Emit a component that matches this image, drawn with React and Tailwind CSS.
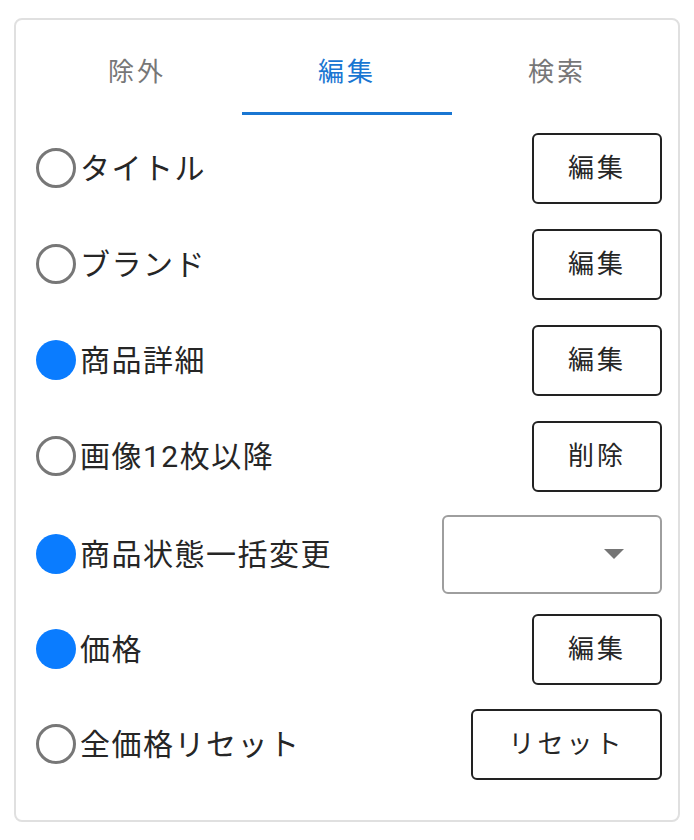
import { useState } from "react";

const tabs = ["除外", "編集", "検索"];

// 行ごとの高さは見た目に合わせて調整
const rows = [
  { label: "タイトル", checked: false, action: "編集", h: "h-[96px]" },
  { label: "ブランド", checked: false, action: "編集", h: "h-[96px]" },
  { label: "商品詳細", checked: true, action: "編集", h: "h-[96px]" },
  { label: "画像12枚以降", checked: false, action: "削除", h: "h-[96px]" },
  { label: "商品状態一括変更", checked: true, select: true, h: "h-[100px]" },
  { label: "価格", checked: true, action: "編集", h: "h-[90px]" },
  { label: "全価格リセット", checked: false, action: "リセット", wide: true, h: "h-[100px]" },
];

function Radio({ checked }) {
  if (checked) {
    return <span className="block w-[40px] h-[40px] rounded-full bg-[#0a7cff] shrink-0" />;
  }
  return <span className="block w-[40px] h-[40px] rounded-full border-[3px] border-[#777777] shrink-0" />;
}

export default function App() {
  const [active, setActive] = useState(1);

  return (
    <div
      className="min-h-screen bg-white pt-[18px] px-[14px]"
      style={{ fontFamily: '"Roboto", "Noto Sans CJK JP", sans-serif' }}
    >
      <div className="w-[666px] h-[804px] border-2 border-[#e0e0e0] rounded-[8px] bg-white">
        {/* タブ */}
        <div className="mx-[16px] flex">
          {tabs.map((t, i) => (
            <button
              key={t}
              onClick={() => setActive(i)}
              className={`relative flex-1 h-[95px] pt-[10px] flex items-center justify-center text-[26px] tracking-[3px] ${
                active === i ? "text-[#1976d2]" : "text-[#777777]"
              }`}
            >
              {t}
              {active === i && (
                <span className="absolute left-0 right-0 bottom-0 h-[3px] bg-[#1976d2]" />
              )}
            </button>
          ))}
        </div>

        {/* 項目 */}
        <div className="mt-[5px] pl-[20px] pr-[16px]">
          {rows.map((r) => (
            <div key={r.label} className={`flex items-center justify-between ${r.h}`}>
              <div className="flex items-center">
                <Radio checked={r.checked} />
                <span className="ml-[4px] text-[30px] tracking-[1.5px] text-[#262626]">
                  {r.label}
                </span>
              </div>
              {r.select ? (
                <div className="w-[220px] h-[79px] border-2 border-[#9e9e9e] rounded-[6px] flex items-center justify-end pr-[36px]">
                  <svg width="20" height="10" viewBox="0 0 20 10">
                    <path d="M0 0 L20 0 L10 10 Z" fill="#757575" />
                  </svg>
                </div>
              ) : (
                <button
                  className={`${
                    r.wide ? "w-[191px]" : "w-[130px]"
                  } h-[71px] border-2 border-[#222222] rounded-[6px] text-[26px] tracking-[3px] text-[#262626] flex items-center justify-center`}
                >
                  {r.action}
                </button>
              )}
            </div>
          ))}
        </div>
      </div>
    </div>
  );
}
